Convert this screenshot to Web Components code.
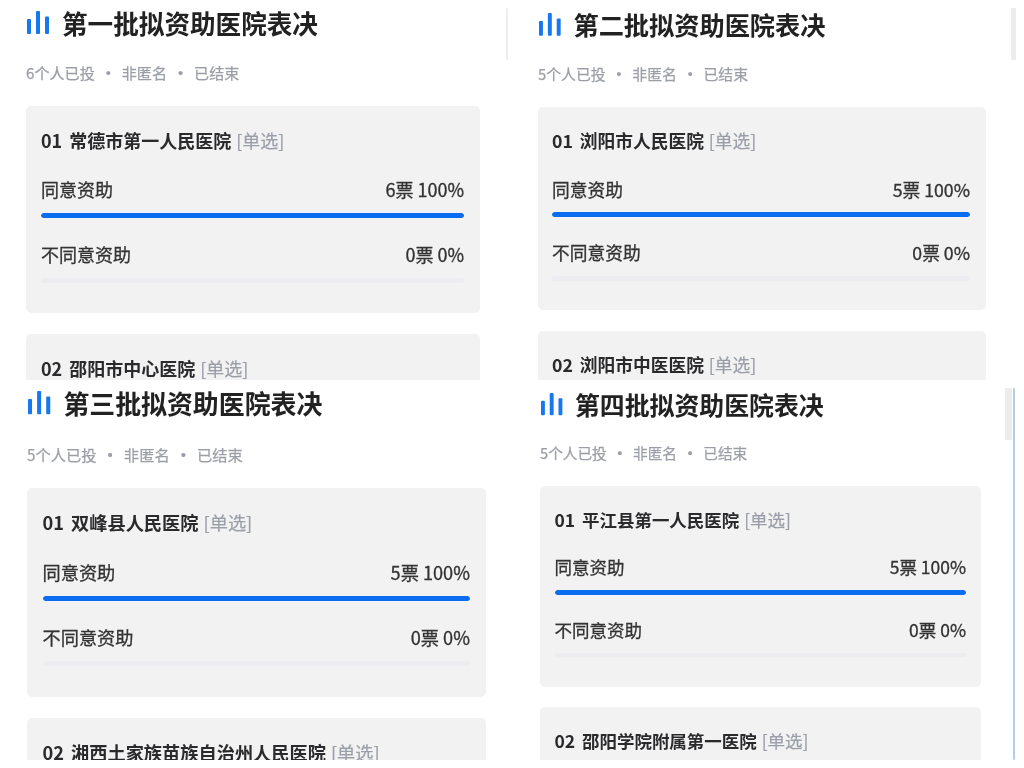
<!DOCTYPE html>
<html lang="zh-CN">
<head>
<meta charset="utf-8">
<title>拟资助医院表决</title>
<style>
html,body{margin:0;padding:0;background:#fff}
body{font-family:"Noto Sans CJK SC","Noto Sans",sans-serif;width:1024px;height:768px;overflow:hidden}
poll-board{display:grid}
</style>
</head>
<body>
<poll-board>
  <poll-panel style="--s:1;--top:0px;--left:26px;--right:32px;--il:15px;--ir:16px">
    <span slot="title">第一批拟资助医院表决</span>
    <span slot="meta">6个人已投</span><span slot="meta">非匿名</span><span slot="meta">已结束</span>
    <poll-card num="01" name="常德市第一人民医院">
      <poll-option label="同意资助" votes="6票 100%" pct="100"></poll-option>
      <poll-option label="不同意资助" votes="0票 0%" pct="0"></poll-option>
    </poll-card>
    <poll-card num="02" name="邵阳市中心医院"></poll-card>
    <panel-scroll slot="scroll" style="--x:506px;--y:8px;--w:2px;--h:52px;--c:#eeeef0"></panel-scroll>
  </poll-panel>

  <poll-panel style="--s:.985;--top:2.6px;--left:26px;--right:38px;--il:14px;--ir:16px">
    <span slot="title">第二批拟资助医院表决</span>
    <span slot="meta">5个人已投</span><span slot="meta">非匿名</span><span slot="meta">已结束</span>
    <poll-card num="01" name="浏阳市人民医院">
      <poll-option label="同意资助" votes="5票 100%" pct="100"></poll-option>
      <poll-option label="不同意资助" votes="0票 0%" pct="0"></poll-option>
    </poll-card>
    <poll-card num="02" name="浏阳市中医医院"></poll-card>
    <panel-scroll slot="scroll" style="--x:499px;--y:8px;--w:5px;--h:52px;--c:#ececee"></panel-scroll>
  </poll-panel>

  <poll-panel style="--s:1.012;--top:.7px;--left:27px;--right:26px;--il:15.5px;--ir:16px">
    <span slot="title">第三批拟资助医院表决</span>
    <span slot="meta">5个人已投</span><span slot="meta">非匿名</span><span slot="meta">已结束</span>
    <poll-card num="01" name="双峰县人民医院">
      <poll-option label="同意资助" votes="5票 100%" pct="100"></poll-option>
      <poll-option label="不同意资助" votes="0票 0%" pct="0"></poll-option>
    </poll-card>
    <poll-card num="02" name="湘西土家族苗族自治州人民医院"></poll-card>
  </poll-panel>

  <poll-panel style="--s:.972;--top:3px;--left:28px;--right:43px;--il:14.5px;--ir:15px">
    <span slot="title">第四批拟资助医院表决</span>
    <span slot="meta">5个人已投</span><span slot="meta">非匿名</span><span slot="meta">已结束</span>
    <poll-card num="01" name="平江县第一人民医院">
      <poll-option label="同意资助" votes="5票 100%" pct="100"></poll-option>
      <poll-option label="不同意资助" votes="0票 0%" pct="0"></poll-option>
    </poll-card>
    <poll-card num="02" name="邵阳学院附属第一医院"></poll-card>
    <panel-scroll slot="scroll" style="--x:493px;--y:8px;--w:7px;--h:52px;--c:#ececee"></panel-scroll>
    <panel-scroll slot="scroll" style="--x:501px;--y:8px;--w:2px;--h:372px;--c:#b4cde4"></panel-scroll>
  </poll-panel>
</poll-board>

<script>
function shadow(el, html){ el.attachShadow({mode:'open'}).innerHTML = html; }

customElements.define('poll-board', class extends HTMLElement{
  constructor(){ super(); shadow(this, `<style>
    :host{display:grid;grid-template-columns:512px 512px;grid-template-rows:380px 380px;width:1024px;height:760px}
  </style><slot></slot>`); }
});

customElements.define('poll-panel', class extends HTMLElement{
  constructor(){ super(); shadow(this, `<style>
    :host{display:block;position:relative;overflow:hidden;box-sizing:border-box;
      padding:var(--top) var(--right) 0 var(--left);height:380px;min-width:0}
    .wrap{filter:blur(.55px)}
    header{display:flex;align-items:center;gap:calc(var(--s)*12px);height:calc(var(--s)*44px);
      font-size:calc(var(--s)*25.6px);font-weight:700;color:#222}
    svg{width:calc(var(--s)*23px);height:calc(var(--s)*23px);margin-left:calc(var(--s)*1px);flex:none}
    .meta{display:flex;align-items:center;height:calc(var(--s)*20px);margin:calc(var(--s)*18px) 0 calc(var(--s)*24px);
      font-size:calc(var(--s)*15.1px);color:#9b9ea6;-webkit-text-stroke:.25px #9b9ea6}
    .meta ::slotted(span:not(:last-of-type))::after{content:"·";display:inline-block;width:calc(var(--s)*27px);text-align:center;font-weight:700}
    .cards{display:flex;flex-direction:column;gap:calc(var(--s)*21px)}
    ::slotted([slot=scroll]){position:absolute}
  </style>
  <div class="wrap">
    <header>
      <svg viewBox="0 0 23 23" aria-hidden="true" fill="#1677ee">
        <rect x="0" y="8" width="4" height="15" rx="1"/>
        <rect x="9" y="0" width="4" height="23" rx="1"/>
        <rect x="18" y="5.5" width="4" height="17.5" rx="1"/>
      </svg>
      <slot name="title"></slot>
    </header>
    <div class="meta"><slot name="meta"></slot></div>
    <div class="cards"><slot></slot></div>
  </div>
  <slot name="scroll"></slot>`); }
});

customElements.define('poll-card', class extends HTMLElement{
  constructor(){ super();
    const num=this.getAttribute('num'), name=this.getAttribute('name');
    shadow(this, `<style>
    :host{display:block;background:#f2f2f3;border-radius:5px;box-sizing:border-box;
      padding:calc(var(--s)*23px) var(--ir) calc(var(--s)*30px) var(--il)}
    .t{display:flex;align-items:center;height:calc(var(--s)*22px);font-size:calc(var(--s)*18px);font-weight:700;color:#2a2a2c;white-space:nowrap}
    .n{margin-right:calc(var(--s)*7px)}
    .k{margin-left:calc(var(--s)*5px);font-weight:400;color:#9a9ea8;-webkit-text-stroke:.2px #9a9ea8}
    .o{display:flex;flex-direction:column;gap:calc(var(--s)*23.5px);margin-top:calc(var(--s)*26px)}
    </style>
    <div class="t"><span class="n">${num}</span><span>${name}</span><span class="k">[单选]</span></div>
    <div class="o"><slot></slot></div>`);
  }
});

customElements.define('poll-option', class extends HTMLElement{
  constructor(){ super();
    const a=n=>this.getAttribute(n);
    shadow(this, `<style>
    :host{display:block}
    .r{display:flex;justify-content:space-between;align-items:center;height:calc(var(--s)*24px);
      font-size:calc(var(--s)*18px);color:#333;-webkit-text-stroke:.3px #333}
    .track{height:calc(var(--s)*5px);margin-top:calc(var(--s)*12px);border-radius:3px;background:#ededf1;overflow:hidden}
    .fill{height:100%;width:${a('pct')}%;background:#0a6cf0;border-radius:3px}
    </style>
    <div class="r"><span>${a('label')}</span><span>${a('votes')}</span></div>
    <div class="track"><div class="fill"></div></div>`);
  }
});

customElements.define('panel-scroll', class extends HTMLElement{
  constructor(){ super(); shadow(this, `<style>
    :host{display:block;position:absolute;left:var(--x);top:var(--y);width:var(--w);height:var(--h);background:var(--c);border-radius:1px}
  </style>`); }
});
</script>
</body>
</html>
